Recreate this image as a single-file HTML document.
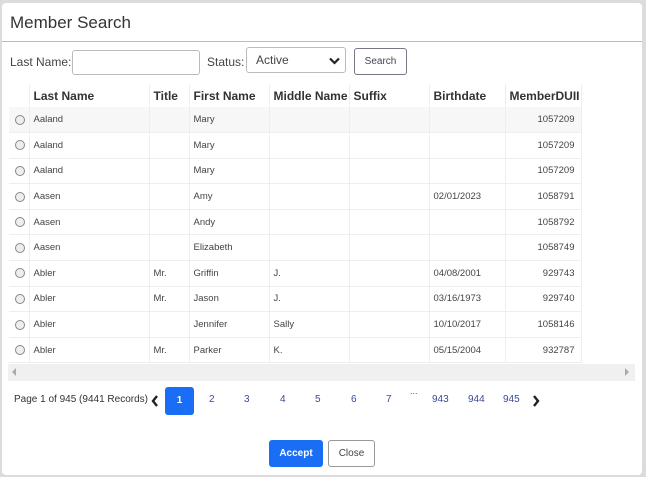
<!DOCTYPE html>
<html><head><style>
*{box-sizing:border-box;margin:0;padding:0}
body{width:646px;height:477px;background:#dcdcdc;font-family:"Liberation Sans",sans-serif;position:relative;overflow:hidden;color:#333}
.modal{position:absolute;left:2px;top:3px;width:640px;height:472px;background:#fff;border-radius:4px}
.a{position:absolute}
.title{left:8px;top:10px;font-size:17px;color:#333}
.hr{left:0;top:38px;width:640px;height:1px;background:#bbb}
.lbl{font-size:12px;color:#444}
table{position:absolute;left:7px;top:81px;border-collapse:collapse;font-size:9.5px;color:#444}
td,th{height:25.6px;border-right:1px solid #eee;border-bottom:1px solid #eee;padding-left:4px;text-align:left;white-space:nowrap;overflow:hidden}
th{font-size:12px;font-weight:bold;color:#333;height:23px;border-bottom:none}
tr.f td{background:#f7f7f7}
.r{display:inline-block;width:10px;height:10px;border:1px solid #888;border-radius:50%;background:#eee;margin-left:2px;vertical-align:middle}
td.n{text-align:right;padding-right:6px}
.pg{font-size:10px;color:#3b4a9a;top:391px}
</style></head><body>
<div class="modal">
<div class="a title">Member Search</div>
<div class="a hr"></div>
<div class="a lbl" style="left:8px;top:52px">Last Name:</div>
<div class="a" style="left:70px;top:47px;width:128px;height:25px;border:1px solid #bbb;border-radius:3px"></div>
<div class="a lbl" style="left:205px;top:52px">Status:</div>
<div class="a" style="left:244px;top:44px;width:100px;height:26px;border:1px solid #bbb;border-radius:3px"><span class="lbl" style="position:absolute;left:9px;top:5px">Active</span><svg style="position:absolute;left:82px;top:9px" width="11" height="8" viewBox="0 0 11 8"><path d="M1 1.5L5.5 6L10 1.5" stroke="#222" stroke-width="2.2" fill="none"/></svg></div>
<div class="a" style="left:352px;top:45px;width:53px;height:27px;border:1px solid #778;border-radius:3px;font-size:10px;color:#445;text-align:center;line-height:25px">Search</div>
<table>
<tr><th style="width:20px"></th><th style="width:120px">Last Name</th><th style="width:40px">Title</th><th style="width:80px">First Name</th><th style="width:80px">Middle Name</th><th style="width:80px">Suffix</th><th style="width:76px">Birthdate</th><th style="width:76px">MemberDUII</th></tr>
<tr class="f"><td><span class="r"></span></td><td>Aaland</td><td></td><td>Mary</td><td></td><td></td><td></td><td class="n">1057209</td></tr>
<tr><td><span class="r"></span></td><td>Aaland</td><td></td><td>Mary</td><td></td><td></td><td></td><td class="n">1057209</td></tr>
<tr><td><span class="r"></span></td><td>Aaland</td><td></td><td>Mary</td><td></td><td></td><td></td><td class="n">1057209</td></tr>
<tr><td><span class="r"></span></td><td>Aasen</td><td></td><td>Amy</td><td></td><td></td><td>02/01/2023</td><td class="n">1058791</td></tr>
<tr><td><span class="r"></span></td><td>Aasen</td><td></td><td>Andy</td><td></td><td></td><td></td><td class="n">1058792</td></tr>
<tr><td><span class="r"></span></td><td>Aasen</td><td></td><td>Elizabeth</td><td></td><td></td><td></td><td class="n">1058749</td></tr>
<tr><td><span class="r"></span></td><td>Abler</td><td>Mr.</td><td>Griffin</td><td>J.</td><td></td><td>04/08/2001</td><td class="n">929743</td></tr>
<tr><td><span class="r"></span></td><td>Abler</td><td>Mr.</td><td>Jason</td><td>J.</td><td></td><td>03/16/1973</td><td class="n">929740</td></tr>
<tr><td><span class="r"></span></td><td>Abler</td><td></td><td>Jennifer</td><td>Sally</td><td></td><td>10/10/2017</td><td class="n">1058146</td></tr>
<tr><td><span class="r"></span></td><td>Abler</td><td>Mr.</td><td>Parker</td><td>K.</td><td></td><td>05/15/2004</td><td class="n">932787</td></tr>
</table>
<div class="a" style="left:6px;top:361px;width:627px;height:17px;background:#f0f0f0"></div>
<div class="a" style="left:10px;top:365px;width:0;height:0;border-top:4px solid transparent;border-bottom:4px solid transparent;border-right:4px solid #aaa"></div>
<div class="a" style="left:623px;top:365px;width:0;height:0;border-top:4px solid transparent;border-bottom:4px solid transparent;border-left:4px solid #aaa"></div>
<div class="a" style="left:12px;top:391px;font-size:10px;color:#333">Page 1 of 945 (9441 Records)</div>
<svg class="a" style="left:149px;top:392px" width="8" height="12" viewBox="0 0 8 12"><path d="M6 1L2 6L6 11" stroke="#222" stroke-width="2.4" fill="none"/></svg>
<div class="a" style="left:163px;top:384px;width:29px;height:28px;background:#1a6ef5;border-radius:3px;color:#fff;font-size:10px;font-weight:bold;text-align:center;line-height:28px">1</div>
<div class="a pg" style="left:207px">2</div>
<div class="a pg" style="left:242px">3</div>
<div class="a pg" style="left:278px">4</div>
<div class="a pg" style="left:313px">5</div>
<div class="a pg" style="left:349px">6</div>
<div class="a pg" style="left:384px">7</div>
<div class="a" style="left:408px;top:383px;font-size:9px;color:#555">...</div>
<div class="a pg" style="left:430px">943</div>
<div class="a pg" style="left:466px">944</div>
<div class="a pg" style="left:501px">945</div>
<svg class="a" style="left:530px;top:392px" width="8" height="12" viewBox="0 0 8 12"><path d="M2 1L6 6L2 11" stroke="#222" stroke-width="2.4" fill="none"/></svg>
<div class="a" style="left:267px;top:437px;width:54px;height:27px;background:#1a6ef5;border-radius:3px;color:#fff;font-size:10px;font-weight:bold;text-align:center;line-height:27px">Accept</div>
<div class="a" style="left:326px;top:437px;width:47px;height:27px;border:1px solid #999;border-radius:3px;color:#444;font-size:10px;text-align:center;line-height:25px">Close</div>
</div>
</body></html>
